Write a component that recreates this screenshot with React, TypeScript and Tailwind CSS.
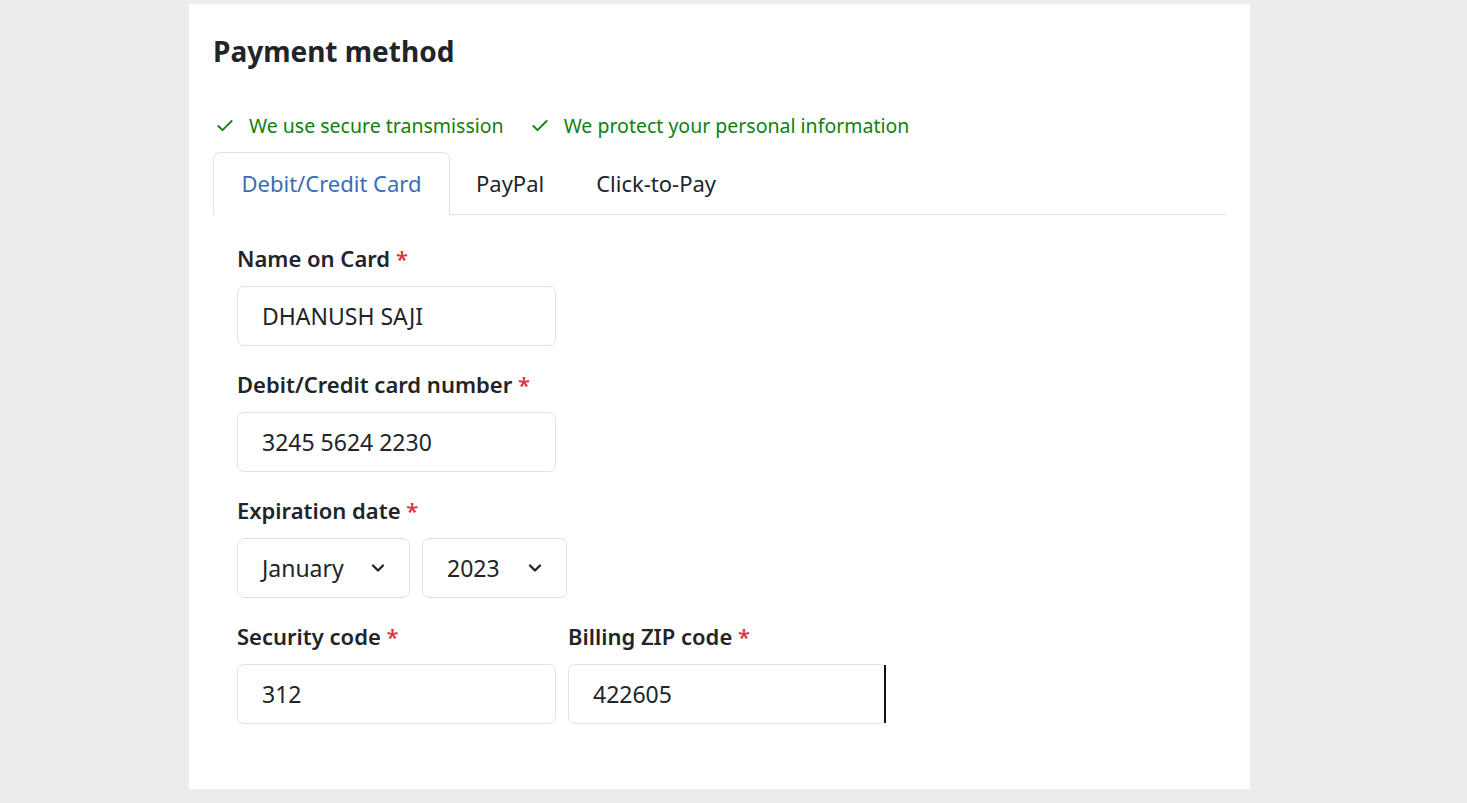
import { Check, ChevronDown } from "lucide-react";

const font = { fontFamily: '"Noto Sans", "Open Sans", sans-serif' };

function Label({ text }: { text: string }) {
  return (
    <div className="mb-[14px] h-7 text-[22px] leading-7 font-semibold text-[#212529]">
      {text} <span className="text-[#dc3545]">*</span>
    </div>
  );
}

function TextBox({ value, width, caret }: { value: string; width: string; caret?: boolean }) {
  return (
    <div className={`relative flex h-[60px] items-center rounded-[7px] border border-[#dee2e6] bg-white pl-6 text-[23px] text-[#212529] ${width}`}>
      {value}
      {caret && <span className="absolute -right-px top-0 h-full w-[2px] bg-[#111]" />}
    </div>
  );
}

function SelectBox({ value, width }: { value: string; width: string }) {
  return (
    <div className={`flex h-[60px] items-center justify-between rounded-[7px] border border-[#dee2e6] bg-white pl-6 pr-[21px] text-[23px] text-[#212529] ${width}`}>
      <span>{value}</span>
      <ChevronDown className="size-[20px]" strokeWidth={2.8} />
    </div>
  );
}

export default function App() {
  return (
    <div className="min-h-[803px] bg-[#ececec] pt-1" style={font}>
      <div className="ml-[189px] h-[785px] w-[1061px] bg-white px-6 pt-[29px]">
        <h1 className="text-[28px] leading-9 font-bold text-[#212529]">Payment method</h1>

        <div className="mt-[45px] flex items-center gap-[26px] text-[19.5px] leading-6 text-[#108010]">
          <div className="flex items-center gap-[14px] pl-[2px]">
            <Check className="size-[20px]" strokeWidth={2.2} />
            <span>We use secure transmission</span>
          </div>
          <div className="flex items-center gap-[14px]">
            <Check className="size-[20px]" strokeWidth={2.2} />
            <span>We protect your personal information</span>
          </div>
        </div>

        <div className="mt-[14px] flex h-[63px] border-b border-[#dee2e6] text-[22px]">
          <div className="-mb-px flex w-[237px] items-center justify-center rounded-t-[7px] border border-b-white border-[#dee2e6] bg-white text-[#3a6db5]">
            Debit/Credit Card
          </div>
          <div className="flex items-center px-[26px] text-[#212529]">PayPal</div>
          <div className="flex items-center px-[26px] text-[#212529]">Click-to-Pay</div>
        </div>

        <div className="flex flex-col gap-[24px] px-6 pt-[29px]">
          <div>
            <Label text="Name on Card" />
            <TextBox value="DHANUSH SAJI" width="w-[319px]" />
          </div>
          <div>
            <Label text="Debit/Credit card number" />
            <TextBox value="3245 5624 2230" width="w-[319px]" />
          </div>
          <div>
            <Label text="Expiration date" />
            <div className="flex gap-[12px]">
              <SelectBox value="January" width="w-[173px]" />
              <SelectBox value="2023" width="w-[145px]" />
            </div>
          </div>
          <div className="flex gap-[12px]">
            <div>
              <Label text="Security code" />
              <TextBox value="312" width="w-[319px]" />
            </div>
            <div>
              <Label text="Billing ZIP code" />
              <TextBox value="422605" width="w-[318px]" caret />
            </div>
          </div>
        </div>
      </div>
    </div>
  );
}
